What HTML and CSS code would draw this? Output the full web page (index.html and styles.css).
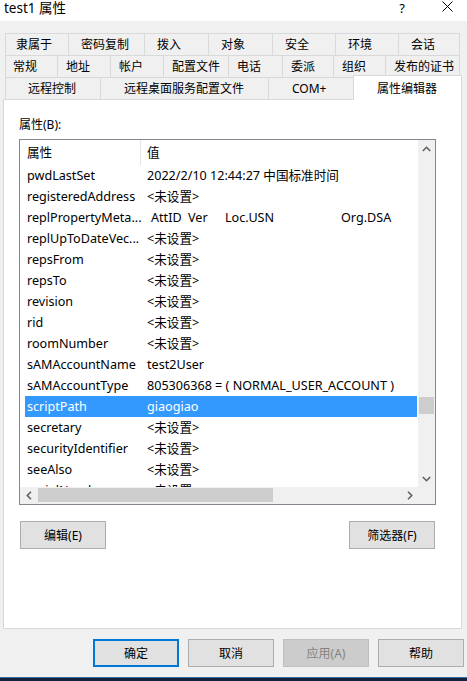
FILE: index.html
```html
<!DOCTYPE html>
<html>
<head>
<meta charset="utf-8">
<link rel="stylesheet" href="styles.css">
</head>
<body>
<div class="window">
  <div class="titlebar">
    <span class="title">test1 属性</span>
    <span class="help">?</span>
    <svg class="close" width="11" height="11" viewBox="0 0 11 11"><path d="M0.5 0.5 L10.5 10.5 M10.5 0.5 L0.5 10.5" stroke="#000" stroke-width="1" fill="none"/></svg>
  </div>
  <div class="dialog">
    <div class="tabs">
      <div class="tabrow row1">
        <div class="tab">隶属于</div>
        <div class="tab">密码复制</div>
        <div class="tab">拨入</div>
        <div class="tab">对象</div>
        <div class="tab">安全</div>
        <div class="tab">环境</div>
        <div class="tab">会话</div>
      </div>
      <div class="tabrow row2">
        <div class="tab">常规</div>
        <div class="tab">地址</div>
        <div class="tab">帐户</div>
        <div class="tab">配置文件</div>
        <div class="tab">电话</div>
        <div class="tab">委派</div>
        <div class="tab">组织</div>
        <div class="tab">发布的证书</div>
      </div>
      <div class="tabrow row3">
        <div class="tab">远程控制</div>
        <div class="tab">远程桌面服务配置文件</div>
        <div class="tab">COM+</div>
        <div class="tab active">属性编辑器</div>
      </div>
    </div>
    <div class="panel">
      <div class="label">属性(B):</div>
      <div class="listbox">
        <div class="list-main">
          <div class="list-head">
            <div class="h1">属性</div>
            <div class="h2">值</div>
          </div>
          <div class="rows">
            <div class="row"><span class="c1">pwdLastSet</span><span class="c2">2022/2/10 12:44:27 中国标准时间</span></div>
            <div class="row"><span class="c1">registeredAddress</span><span class="c2">&lt;未设置&gt;</span></div>
            <div class="row"><span class="c1">replPropertyMeta...</span><span class="c2 multi"><span class="m1">AttID</span><span class="m2">Ver</span><span class="m3">Loc.USN</span><span>Org.DSA</span></span></div>
            <div class="row"><span class="c1">replUpToDateVec...</span><span class="c2">&lt;未设置&gt;</span></div>
            <div class="row"><span class="c1">repsFrom</span><span class="c2">&lt;未设置&gt;</span></div>
            <div class="row"><span class="c1">repsTo</span><span class="c2">&lt;未设置&gt;</span></div>
            <div class="row"><span class="c1">revision</span><span class="c2">&lt;未设置&gt;</span></div>
            <div class="row"><span class="c1">rid</span><span class="c2">&lt;未设置&gt;</span></div>
            <div class="row"><span class="c1">roomNumber</span><span class="c2">&lt;未设置&gt;</span></div>
            <div class="row"><span class="c1">sAMAccountName</span><span class="c2">test2User</span></div>
            <div class="row"><span class="c1">sAMAccountType</span><span class="c2">805306368 = ( NORMAL_USER_ACCOUNT )</span></div>
            <div class="row selected"><span class="c1">scriptPath</span><span class="c2">giaogiao</span></div>
            <div class="row"><span class="c1">secretary</span><span class="c2">&lt;未设置&gt;</span></div>
            <div class="row"><span class="c1">securityIdentifier</span><span class="c2">&lt;未设置&gt;</span></div>
            <div class="row"><span class="c1">seeAlso</span><span class="c2">&lt;未设置&gt;</span></div>
            <div class="row"><span class="c1">serialNumber</span><span class="c2">&lt;未设置&gt;</span></div>
          </div>
        </div>
        <div class="vscroll">
          <div class="arrow"><svg width="9" height="6" viewBox="0 0 9 6"><polyline points="0.8,5 4.5,1.3 8.2,5" fill="none" stroke="#606060" stroke-width="1.6"/></svg></div>
          <div class="vtrack"><div class="vthumb"></div></div>
          <div class="arrow"><svg width="9" height="6" viewBox="0 0 9 6"><polyline points="0.8,1 4.5,4.7 8.2,1" fill="none" stroke="#606060" stroke-width="1.6"/></svg></div>
        </div>
        <div class="hscroll">
          <div class="harrow"><svg width="6" height="9" viewBox="0 0 6 9"><polyline points="5,0.8 1.3,4.5 5,8.2" fill="none" stroke="#606060" stroke-width="1.6"/></svg></div>
          <div class="htrack"><div class="hthumb"></div></div>
          <div class="harrow"><svg width="6" height="9" viewBox="0 0 6 9"><polyline points="1,0.8 4.7,4.5 1,8.2" fill="none" stroke="#606060" stroke-width="1.6"/></svg></div>
        </div>
        <div class="corner"></div>
      </div>
      <div class="panel-buttons">
        <button class="btn">编辑(E)</button>
        <button class="btn">筛选器(F)</button>
      </div>
    </div>
    <div class="footer">
      <button class="btn default">确定</button>
      <button class="btn">取消</button>
      <button class="btn disabled">应用(A)</button>
      <button class="btn">帮助</button>
    </div>
  </div>
  <div class="taskbar"></div>
</div>
</body>
</html>
```

FILE: styles.css
```css
* { box-sizing: border-box; margin: 0; padding: 0; }
html, body { width: 467px; height: 681px; overflow: hidden; }
body {
  font-family: "Noto Sans", "Noto Sans CJK SC", sans-serif;
  font-size: 12px;
  color: #000;
  background: #f0f0f0;
}
.window { display: flex; flex-direction: column; height: 681px; }

.titlebar {
  height: 21px;
  background: #fff;
  display: flex;
  align-items: flex-start;
}
.title { margin-left: 4px; line-height: 16px; font-size: 13.5px; }
.help { margin-left: auto; line-height: 16px; font-size: 13px; }
.close { margin: 1px 14px 0 37px; }

.dialog {
  flex: 1;
  display: flex;
  flex-direction: column;
  padding: 12px 0 0 3px;
}
.tabs { margin-left: 2px; }
.tabrow { display: grid; height: 22px; }
.row1 { grid-template-columns: 63px 76px 64px 64px 63px 63px 62px; }
.row2 { grid-template-columns: 52px 53px 53px 65px 54px 51px 52px 75px; }
.row3 { grid-template-columns: 95px 168px 85px 109px; }
.tab {
  border-top: 1px solid #d9d9d9;
  border-left: 1px solid #d9d9d9;
  line-height: 21px;
  white-space: nowrap;
}
.row1 .tab { padding-left: 12px; }
.row1 .tab:first-child { padding-left: 10px; }
.row2 .tab { padding-left: 8px; }
.row2 .tab:first-child { padding-left: 7px; }
.row3 .tab { padding-left: 23px; }
.row3 .tab:first-child { padding-left: 22px; }
.row1 .tab:last-child, .row2 .tab:last-child { border-right: 1px solid #d9d9d9; }
.tab.active {
  position: relative;
  z-index: 1;
  background: #fff;
  border-right: 1px solid #d9d9d9;
  margin-top: -2px;
  height: 25px;
  padding-top: 2px;
}

.panel {
  width: 459px;
  height: 530px;
  background: #fff;
  border: 1px solid #d9d9d9;
  padding: 17px 0 0 15px;
}
.label { line-height: 16px; }
.listbox {
  margin-top: 6px;
  width: 417px;
  height: 366px;
  border: 1px solid #828790;
  display: grid;
  grid-template-columns: 398px 17px;
  grid-template-rows: 347px 17px;
  font-size: 12.6px;
}
.list-main { overflow: hidden; background: #fff; }
.list-head { display: flex; height: 25px; line-height: 25px; }
.h1 { width: 121px; padding-left: 7px; border-right: 1px solid #e5e5e5; }
.h2 { padding-left: 6px; }
.rows { margin-left: 5px; width: 392px; }
.row { display: flex; height: 21px; line-height: 21px; padding-left: 2px; white-space: nowrap; }
.row.selected { background: #3399ff; color: #fff; }
.c1 { width: 120px; flex: none; overflow: hidden; }
.multi { display: flex; padding-left: 4px; }
.m1, .m2 { width: 37px; }
.m3 { width: 116px; }

.vscroll { background: #f0f0f0; display: flex; flex-direction: column; }
.arrow { height: 17px; display: flex; align-items: center; justify-content: center; }
.vtrack { flex: 1; padding: 0 1px; }
.vthumb { margin-top: 240px; height: 17px; background: #cdcdcd; }
.hscroll { background: #f0f0f0; display: flex; }
.harrow { width: 17px; display: flex; align-items: center; justify-content: center; }
.htrack { flex: 1; padding: 1px 0 0 1px; }
.hthumb { width: 235px; height: 14px; background: #cdcdcd; }
.corner { background: #f0f0f0; }

.btn {
  width: 86px;
  height: 28px;
  border: 1px solid #adadad;
  background: #e1e1e1;
  font-family: "Noto Sans", "Noto Sans CJK SC", sans-serif;
  font-size: 12px;
  color: #000;
}
.panel-buttons {
  margin: 16px 0 0 1px;
  width: 415px;
  display: flex;
  justify-content: space-between;
}
.footer {
  margin-top: 10px;
  display: flex;
  justify-content: flex-end;
  gap: 9px;
  padding-right: 3px;
}
.btn.default { border: 2px solid #0078d7; }
.btn.disabled { background: #cccccc; border-color: #bfbfbf; color: #838383; }

.taskbar {
  height: 4px;
  background: #13223a;
  border-top: 1px solid #3a6ea5;
}
```
